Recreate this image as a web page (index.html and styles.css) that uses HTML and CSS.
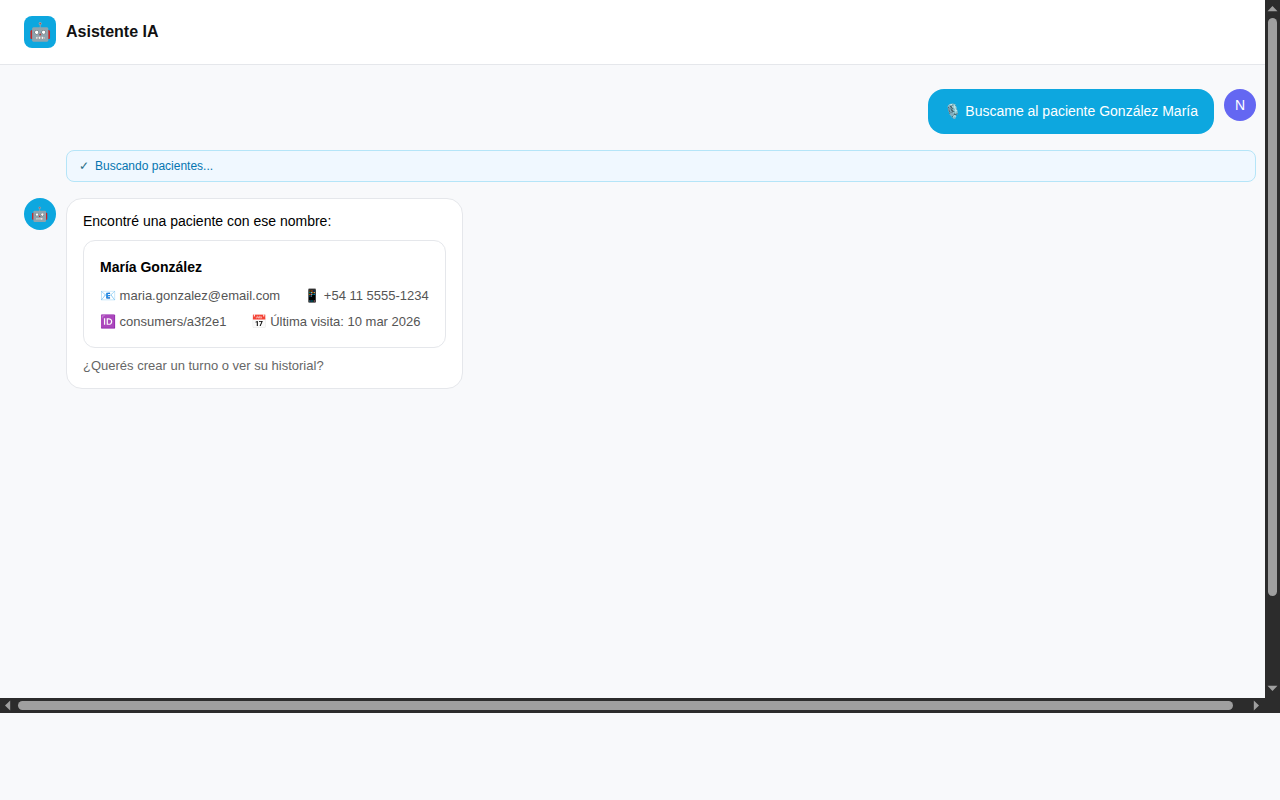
FILE: index.html
```
<!DOCTYPE html>
<html lang="es">
<head>
    <meta charset="UTF-8">
    <title>Asistente IA</title>
    <link rel="stylesheet" href="styles.css">
</head>
<body>
    <div class="frame">
        <div class="viewport">
            <div class="app">
                <header class="header">
                    <div class="logo">🤖</div>
                    <h1 class="title">Asistente IA</h1>
                </header>

                <main class="chat">
                    <div class="message user">
                        <div class="bubble">🎙️ Buscame al paciente González María</div>
                        <div class="avatar">N</div>
                    </div>

                    <div class="tool-status"><span class="check">✓</span> Buscando pacientes...</div>

                    <div class="message">
                        <div class="avatar bot">🤖</div>
                        <div class="bubble">
                            <p>Encontré una paciente con ese nombre:</p>
                            <div class="patient-card">
                                <h2 class="patient-name">María González</h2>
                                <div class="patient-row">
                                    <span>📧 maria.gonzalez@email.com</span>
                                    <span>📱 +54 11 5555-1234</span>
                                </div>
                                <div class="patient-row">
                                    <span>🆔 consumers/a3f2e1</span>
                                    <span>📅 Última visita: 10 mar 2026</span>
                                </div>
                            </div>
                            <p class="hint">¿Querés crear un turno o ver su historial?</p>
                        </div>
                    </div>
                </main>
            </div>
        </div>

        <div class="scrollbar vertical">
            <svg class="arrow" viewBox="0 0 15 18"><path d="M2.500 11.200h10L7.500 6z"/></svg>
            <div class="thumb"></div>
            <svg class="arrow" viewBox="0 0 15 18"><path d="M2.500 5.800h10L7.500 11z"/></svg>
        </div>
        <div class="scrollbar horizontal">
            <svg class="arrow" viewBox="0 0 18 15"><path d="M10.200 2.500v10L5 7.500z"/></svg>
            <div class="thumb"></div>
            <svg class="arrow" viewBox="0 0 18 15"><path d="M6.800 2.500v10L12 7.500z"/></svg>
        </div>
        <div class="scroll-corner"></div>
    </div>
</body>
</html>
```
FILE: styles.css
```
* {
    box-sizing: border-box;
    margin: 0;
    padding: 0;
}

body {
    font-family: "Liberation Sans", Arial, sans-serif;
    font-size: 14px;
    line-height: 1.5;
    background: #f8f9fb;
    color: #000;
}

.frame {
    display: grid;
    grid-template-columns: 1265px 15px;
    grid-template-rows: 698px 15px;
    width: 1280px;
}

.viewport {
    overflow: hidden;
}

.app {
    width: 1280px;
    height: 800px;
    background: #f8f9fb;
}

.header {
    display: flex;
    align-items: center;
    gap: 10px;
    height: 65px;
    padding: 0 24px;
    background: #fff;
    border-bottom: 1px solid #e5e7eb;
}

.logo {
    display: flex;
    align-items: center;
    justify-content: center;
    width: 32px;
    height: 32px;
    border-radius: 8px;
    background: #0da7df;
    font-size: 18px;
}

.title {
    font-size: 16px;
    font-weight: 700;
    color: #111;
}

.chat {
    display: flex;
    flex-direction: column;
    gap: 16px;
    padding: 24px;
}

.message {
    display: flex;
    align-items: flex-start;
    gap: 10px;
}

.message.user {
    justify-content: flex-end;
}

.avatar {
    display: flex;
    align-items: center;
    justify-content: center;
    flex-shrink: 0;
    width: 32px;
    height: 32px;
    border-radius: 50%;
    background: #0da7df;
    font-size: 14px;
}

.avatar.bot {
    padding-right: 1px;
}

.user .avatar {
    background: #6467f2;
    color: #fff;
}

.bubble {
    padding: 12px 16px;
    border: 1px solid #e5e7eb;
    border-radius: 16px;
    background: #fff;
}

.user .bubble {
    border: none;
    background: #0da7df;
    color: #fff;
}

.tool-status {
    display: flex;
    align-items: center;
    gap: 6px;
    height: 32px;
    margin-left: 42px;
    padding: 0 12px;
    border: 1px solid #b5e5f8;
    border-radius: 8px;
    background: #f0f8ff;
    color: #0575b0;
    font-size: 12px;
}

.tool-status .check {
    color: #2b7086;
}

.patient-card {
    margin: 8px 0;
    padding: 16px;
    border: 1px solid #e5e7eb;
    border-radius: 12px;
}

.patient-name {
    margin-bottom: 8px;
    font-size: 14px;
}

.patient-row {
    display: flex;
    gap: 24px;
    color: #555;
    font-size: 13px;
}

.patient-row + .patient-row {
    margin-top: 6px;
}

.hint {
    color: #666;
    font-size: 13px;
}

/* scrollbars */
.scrollbar {
    display: flex;
    background: #2c2c2c;
}

.scrollbar.vertical {
    flex-direction: column;
    justify-content: space-between;
}

.scrollbar.horizontal {
    justify-content: space-between;
}

.arrow {
    flex-shrink: 0;
    fill: #9f9f9f;
}

.vertical .arrow {
    width: 15px;
    height: 18px;
}

.horizontal .arrow {
    width: 18px;
    height: 15px;
}

.thumb {
    border-radius: 5px;
    background: #9f9f9f;
}

.vertical .thumb {
    width: 9px;
    height: 578px;
    margin: 0 3px auto;
}

.horizontal .thumb {
    width: 1215px;
    height: 9px;
    margin: 3px auto 3px 0;
}

.scroll-corner {
    background: #2c2c2c;
}
```
